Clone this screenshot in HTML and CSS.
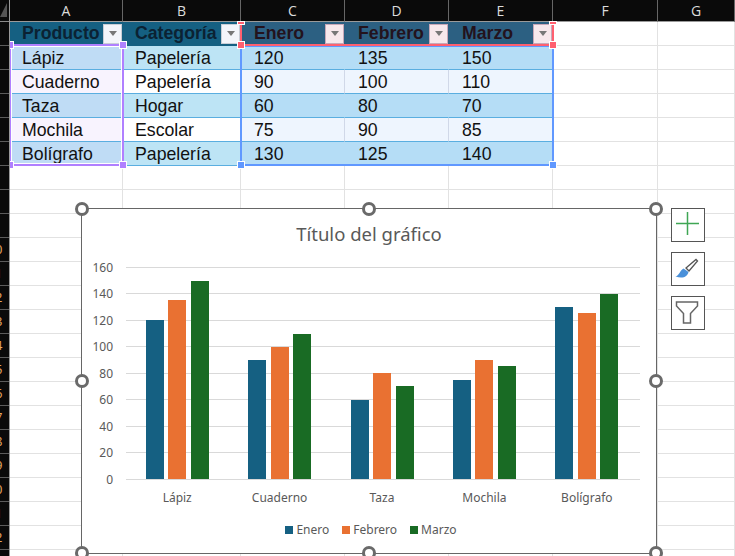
FILE: index.html
```html
<!DOCTYPE html>
<html lang="es">
<head>
    <meta charset="UTF-8">
    <meta name="viewport" content="width=device-width, initial-scale=1.0">
    <title>Libro1 - Excel</title>
    <link rel="stylesheet" href="styles.css">
</head>
<body>
    <div class="page">
        <div class="row-heads">
            <div class="corner"><span class="corner-mark"></span></div>
            <div class="row-head"><span>1</span></div>
            <div class="row-head"><span>2</span></div>
            <div class="row-head"><span>3</span></div>
            <div class="row-head"><span>4</span></div>
            <div class="row-head"><span>5</span></div>
            <div class="row-head"><span>6</span></div>
            <div class="row-head"><span>7</span></div>
            <div class="row-head"><span>8</span></div>
            <div class="row-head"><span>9</span></div>
            <div class="row-head"><span>10</span></div>
            <div class="row-head"><span>11</span></div>
            <div class="row-head"><span>12</span></div>
            <div class="row-head"><span>13</span></div>
            <div class="row-head"><span>14</span></div>
            <div class="row-head"><span>15</span></div>
            <div class="row-head"><span>16</span></div>
            <div class="row-head"><span>17</span></div>
            <div class="row-head"><span>18</span></div>
            <div class="row-head"><span>19</span></div>
            <div class="row-head"><span>20</span></div>
            <div class="row-head"><span>21</span></div>
            <div class="row-head"><span>22</span></div>
            <div class="row-head"><span>23</span></div>
        </div>

        <div class="sheet">
            <div class="sheet-grid">
                <div class="col-head">A</div>
                <div class="col-head">B</div>
                <div class="col-head">C</div>
                <div class="col-head">D</div>
                <div class="col-head">E</div>
                <div class="col-head">F</div>
                <div class="col-head">G</div>

                <div class="th th-text">Producto<span class="filter"></span></div>
                <div class="th th-text">Categoría<span class="filter"></span></div>
                <div class="th th-num">Enero<span class="filter filter-pink"></span></div>
                <div class="th th-num">Febrero<span class="filter filter-pink"></span></div>
                <div class="th th-num">Marzo<span class="filter filter-pink"></span></div>
                <div class="cell"></div>
                <div class="cell"></div>

                <div class="cell name band">Lápiz</div>
                <div class="cell cat band">Papelería</div>
                <div class="cell num band">120</div>
                <div class="cell num band">135</div>
                <div class="cell num band">150</div>
                <div class="cell"></div>
                <div class="cell"></div>

                <div class="cell name">Cuaderno</div>
                <div class="cell cat">Papelería</div>
                <div class="cell num">90</div>
                <div class="cell num">100</div>
                <div class="cell num">110</div>
                <div class="cell"></div>
                <div class="cell"></div>

                <div class="cell name band">Taza</div>
                <div class="cell cat band">Hogar</div>
                <div class="cell num band">60</div>
                <div class="cell num band">80</div>
                <div class="cell num band">70</div>
                <div class="cell"></div>
                <div class="cell"></div>

                <div class="cell name">Mochila</div>
                <div class="cell cat">Escolar</div>
                <div class="cell num">75</div>
                <div class="cell num">90</div>
                <div class="cell num">85</div>
                <div class="cell"></div>
                <div class="cell"></div>

                <div class="cell name band">Bolígrafo</div>
                <div class="cell cat band">Papelería</div>
                <div class="cell num band">130</div>
                <div class="cell num band">125</div>
                <div class="cell num band">140</div>
                <div class="cell"></div>
                <div class="cell"></div>

                <div class="blank"></div>
                <div class="blank"></div>
                <div class="blank"></div>
                <div class="blank"></div>
                <div class="blank"></div>
                <div class="blank"></div>
                <div class="blank"></div>
            </div>

            <div class="sheet-grid ranges">
                <div class="range range-purple">
                    <i class="grip grip-tl"></i><i class="grip grip-tr"></i>
                    <i class="grip grip-bl"></i><i class="grip grip-br"></i>
                </div>
                <div class="range range-blue">
                    <i class="grip grip-bl"></i><i class="grip grip-br"></i>
                </div>
                <div class="range range-red">
                    <i class="grip grip-tl grip-cut"></i><i class="grip grip-tr grip-cut"></i>
                    <i class="grip grip-bl"></i><i class="grip grip-br"></i>
                </div>
            </div>
        </div>

        <div class="chart">
            <i class="knob knob-tl"></i><i class="knob knob-tc"></i><i class="knob knob-tr"></i>
            <i class="knob knob-ml"></i><i class="knob knob-mr"></i>
            <i class="knob knob-bl"></i><i class="knob knob-bc"></i><i class="knob knob-br"></i>

            <div class="chart-title">Título del gráfico</div>

            <div class="plot">
                <div class="ticks">
                    <div class="tick"><span>160</span><i></i></div>
                    <div class="tick"><span>140</span><i></i></div>
                    <div class="tick"><span>120</span><i></i></div>
                    <div class="tick"><span>100</span><i></i></div>
                    <div class="tick"><span>80</span><i></i></div>
                    <div class="tick"><span>60</span><i></i></div>
                    <div class="tick"><span>40</span><i></i></div>
                    <div class="tick"><span>20</span><i></i></div>
                    <div class="tick"><span>0</span><i></i></div>
                </div>
                <div class="groups">
                    <div class="group">
                        <div class="bar jan" style="height: 159px"></div>
                        <div class="bar feb" style="height: 179px"></div>
                        <div class="bar mar" style="height: 198px"></div>
                    </div>
                    <div class="group">
                        <div class="bar jan" style="height: 119px"></div>
                        <div class="bar feb" style="height: 132.5px"></div>
                        <div class="bar mar" style="height: 145px"></div>
                    </div>
                    <div class="group">
                        <div class="bar jan" style="height: 79.5px"></div>
                        <div class="bar feb" style="height: 106px"></div>
                        <div class="bar mar" style="height: 92.75px"></div>
                    </div>
                    <div class="group">
                        <div class="bar jan" style="height: 99.4px"></div>
                        <div class="bar feb" style="height: 119px"></div>
                        <div class="bar mar" style="height: 112.6px"></div>
                    </div>
                    <div class="group">
                        <div class="bar jan" style="height: 172px"></div>
                        <div class="bar feb" style="height: 165.6px"></div>
                        <div class="bar mar" style="height: 185.5px"></div>
                    </div>
                </div>
            </div>

            <div class="x-labels">
                <span>Lápiz</span>
                <span>Cuaderno</span>
                <span>Taza</span>
                <span>Mochila</span>
                <span>Bolígrafo</span>
            </div>

            <div class="legend">
                <span class="legend-item"><i class="jan"></i>Enero</span>
                <span class="legend-item"><i class="feb"></i>Febrero</span>
                <span class="legend-item"><i class="mar"></i>Marzo</span>
            </div>
        </div>

        <div class="chart-tools">
            <div class="tool">
                <svg width="32" height="32" viewBox="0 0 32 32">
                    <path d="M15.500 3v23M4 14.500h23" stroke="#3fa654" stroke-width="1.500" fill="none"/>
                </svg>
            </div>
            <div class="tool">
                <svg width="32" height="32" viewBox="0 0 32 32">
                    <path d="M14 15L24 6.500l1.500 1.500L17 18z" fill="#fff" stroke="#555" stroke-width="1.300"/>
                    <path d="M3.500 23.500c4-1 4-6 8-8l5 3.500c-1 5-6 7-13 4.500z" fill="#4a90d9"/>
                </svg>
            </div>
            <div class="tool">
                <svg width="32" height="32" viewBox="0 0 32 32">
                    <path d="M4.500 5h21v4l-7 7.500V26h-7v-9.500l-7-7.500z" fill="#fff" stroke="#666" stroke-width="1.500"/>
                </svg>
            </div>
        </div>
    </div>
</body>
</html>
```

FILE: styles.css
```css
body {
    margin: 0;
    background-color: #fff;
}
.page {
    position: relative;
    display: flex;
    width: 735px;
    height: 556px;
    overflow: hidden;
}

/* row numbers, the strip is scrolled so only the edge of them shows */
.row-heads {
    width: 10px;
    flex: none;
    background-color: #0a0a0a;
    border-right: 1px solid #9a9a9a;
    box-sizing: border-box;
    overflow: hidden;
}
.corner {
    height: 22px;
    box-sizing: border-box;
    border-bottom: 1px solid #8a8a8a;
    padding-top: 3px;
}
.corner-mark {
    display: block;
    width: 7px;
    height: 14px;
    background-color: #555;
    clip-path: polygon(100% 0, 100% 100%, 0 100%);
}
.row-head {
    height: 24px;
    box-sizing: border-box;
    border-bottom: 1px solid #5c5c5c;
    overflow: hidden;
}
.row-head span {
    display: block;
    width: 20px;
    margin-left: -15px;
    text-align: center;
    font: 13px/23px "Open Sans", sans-serif;
    color: #e8a860;
}

.sheet {
    flex: 1;
    display: grid;
    overflow: hidden;
    font-family: "Liberation Sans", Arial, sans-serif;
    font-size: 17.7px;
    color: #111;
}
.sheet-grid {
    grid-area: 1 / 1;
    display: grid;
    grid-template-columns: 113px 118px 104px 104px 104px 105px 77px;
    grid-template-rows: 22px repeat(6, 24px) 1fr;
}
.col-head {
    background-color: #0a0a0a;
    border-right: 1px solid #666;
    border-bottom: 1px solid #9a9a9a;
    box-sizing: border-box;
    text-align: center;
    font: 14px/21px "Open Sans", sans-serif;
    color: #dcdcdc;
}
.th {
    display: flex;
    justify-content: space-between;
    align-items: center;
    padding: 0 1px 1px 12px;
    box-sizing: border-box;
    font-weight: bold;
}
.th-text {
    background-color: #156082;
    color: #0b2233;
}
.th-num {
    background-color: #2c6082;
    color: #23131d;
    padding-left: 13px;
}
.filter {
    width: 19px;
    height: 20px;
    flex: none;
    display: flex;
    align-items: center;
    justify-content: center;
    box-sizing: border-box;
    background-color: #f3f5fa;
    border: 1px solid #c9ced6;
}
.filter::after {
    content: "";
    border-left: 4.500px solid transparent;
    border-right: 4.500px solid transparent;
    border-top: 5px solid #777;
}
.filter-pink {
    background-color: #f7e8ec;
    border-color: #c8a8b8;
}
.cell {
    box-sizing: border-box;
    border-right: 1px solid #e2e2e2;
    border-bottom: 1px solid #e2e2e2;
    padding-left: 12px;
    line-height: 24px;
}
.name {
    background-color: #f8f3fe;
    border-color: #5aaee0;
}
.cat {
    background-color: #fff;
    border-color: #5aaee0;
}
.num {
    background-color: #eef5fe;
    border-right-color: #d0d8e8;
    border-bottom-color: #5aaee0;
    padding-left: 13px;
}
.name.band { background-color: #bfdcf5; }
.cat.band { background-color: #bde4f5; }
.num.band {
    background-color: #b5ddf6;
    border-right-color: #b5ddf6;
}
.blank {
    border-right: 1px solid #e2e2e2;
    background-image: repeating-linear-gradient(to bottom, transparent 0, transparent 23px, #e2e2e2 23px, #e2e2e2 24px);
}

/* coloured ranges the chart is reading from */
.ranges {
    pointer-events: none;
}
.range {
    position: relative;
    box-sizing: border-box;
    border: 2px solid;
}
.range-purple {
    grid-column: 1 / 2;
    grid-row: 3 / 8;
    margin: -2px -1px 0 -1px;
    border-color: #b080ff;
    box-shadow: inset 0 0 0 1px #fff;
}
.range-blue {
    grid-column: 3 / 6;
    grid-row: 3 / 8;
    margin: -1px -1px 0 -1px;
    border-color: #6098ff;
}
.range-red {
    grid-column: 3 / 6;
    grid-row: 2 / 3;
    margin: 0 -1px 0 -1px;
    border-color: #ff6070;
    border-top: none;
}
.grip {
    position: absolute;
    width: 6px;
    height: 6px;
    box-shadow: 0 0 0 1px #fff;
}
.range-purple .grip { background-color: #b080ff; }
.range-blue .grip { background-color: #6098ff; }
.range-red .grip { background-color: #ff6070; }
.grip-tl { left: -4px; top: -4px; }
.grip-tr { right: -4px; top: -4px; }
.grip-bl { left: -4px; bottom: -4px; }
.grip-br { right: -4px; bottom: -4px; }
.grip-cut {
    top: 0;
    height: 2px;
}

/* chart */
.chart {
    position: absolute;
    left: 81px;
    top: 208px;
    width: 576px;
    height: 346px;
    box-sizing: border-box;
    border: 1px solid #666;
    background-color: #fff;
    font-family: "Noto Sans", sans-serif;
    font-size: 12px;
    color: #595959;
}
.knob {
    position: absolute;
    width: 14px;
    height: 14px;
    box-sizing: border-box;
    border: 3px solid #6a6a6a;
    border-radius: 50%;
    background-color: #fff;
    margin: -7px 0 0 -7px;
}
.knob-tl { left: 0; top: 0; }
.knob-tc { left: 50%; top: 0; }
.knob-tr { left: 100%; top: 0; }
.knob-ml { left: 0; top: 50%; }
.knob-mr { left: 100%; top: 50%; }
.knob-bl { left: 0; top: 100%; }
.knob-bc { left: 50%; top: 100%; }
.knob-br { left: 100%; top: 100%; }

.chart-title {
    height: 58px;
    padding-top: 11px;
    box-sizing: border-box;
    text-align: center;
    font-size: 18.5px;
    line-height: 28px;
}
.plot {
    display: grid;
    height: 213px;
}
.plot > * {
    grid-area: 1 / 1;
}
.ticks {
    display: flex;
    flex-direction: column;
    justify-content: space-between;
    padding: 0 16px 1px 0;
}
.tick {
    display: flex;
    align-items: center;
    gap: 13px;
    height: 0;
}
.tick span {
    width: 31px;
    text-align: right;
}
.tick i {
    flex: 1;
    height: 1px;
    background-color: #d9d9d9;
}
.groups {
    display: flex;
    margin: 0 18px 0 44px;
}
.group {
    flex: 1;
    display: flex;
    align-items: flex-end;
    justify-content: center;
    gap: 4.500px;
    padding-bottom: 1px;
}
.bar {
    width: 18px;
}
.jan { background-color: #156082; }
.feb { background-color: #e97132; }
.mar { background-color: #196b24; }

.x-labels {
    display: flex;
    margin: 8px 18px 0 44px;
    line-height: 20px;
}
.x-labels span {
    flex: 1;
    text-align: center;
}
.legend {
    display: flex;
    justify-content: center;
    gap: 13px;
    margin-top: 12px;
    padding-left: 4px;
    line-height: 20px;
}
.legend-item {
    display: flex;
    align-items: center;
    gap: 3px;
}
.legend-item i {
    width: 8px;
    height: 8px;
}

.chart-tools {
    position: absolute;
    left: 671px;
    top: 208px;
    display: flex;
    flex-direction: column;
    gap: 10px;
}
.tool {
    width: 34px;
    height: 34px;
    box-sizing: border-box;
    border: 1px solid #555;
    background-color: #fff;
}
.tool svg {
    display: block;
}
```
